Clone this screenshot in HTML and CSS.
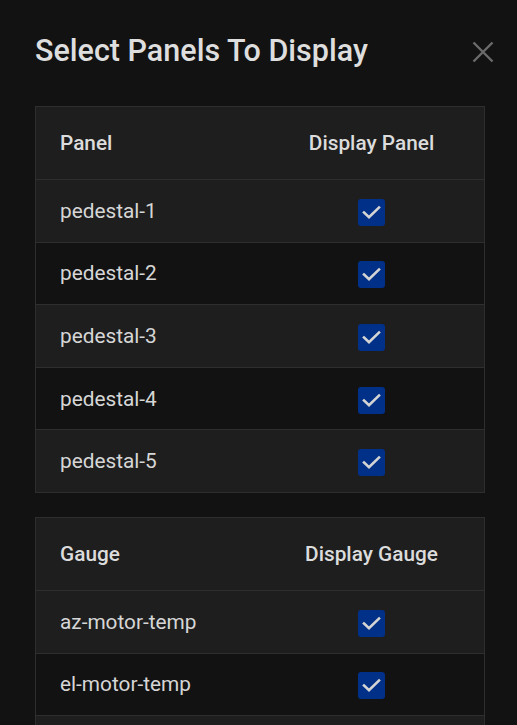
FILE: index.html
```html
<!DOCTYPE html>
<html lang="en">
<head>
<meta charset="utf-8">
<title>Select Panels To Display</title>
<link rel="stylesheet" href="styles.css">
</head>
<body>
<div class="dialog">
  <div class="dialog-head">
    <h1 class="title">Select Panels To Display</h1>
    <button class="close" aria-label="Close">
      <svg viewBox="0 0 22 22" width="22" height="22"><path d="M1.5 1.5 L20.5 20.5 M20.5 1.5 L1.5 20.5" stroke="#6b6b6b" stroke-width="2.4" fill="none"/></svg>
    </button>
  </div>

  <table class="grid">
    <thead>
      <tr><th>Panel</th><th class="c">Display Panel</th></tr>
    </thead>
    <tbody>
      <tr><td>pedestal-1</td><td class="c"><span class="cb"><svg viewBox="0 0 27 27"><polyline points="6,13.5 11,18.3 21,8.5"/></svg></span></td></tr>
      <tr><td>pedestal-2</td><td class="c"><span class="cb"><svg viewBox="0 0 27 27"><polyline points="6,13.5 11,18.3 21,8.5"/></svg></span></td></tr>
      <tr><td>pedestal-3</td><td class="c"><span class="cb"><svg viewBox="0 0 27 27"><polyline points="6,13.5 11,18.3 21,8.5"/></svg></span></td></tr>
      <tr><td>pedestal-4</td><td class="c"><span class="cb"><svg viewBox="0 0 27 27"><polyline points="6,13.5 11,18.3 21,8.5"/></svg></span></td></tr>
      <tr><td>pedestal-5</td><td class="c"><span class="cb"><svg viewBox="0 0 27 27"><polyline points="6,13.5 11,18.3 21,8.5"/></svg></span></td></tr>
    </tbody>
  </table>

  <table class="grid">
    <thead>
      <tr><th>Gauge</th><th class="c">Display Gauge</th></tr>
    </thead>
    <tbody>
      <tr><td>az-motor-temp</td><td class="c"><span class="cb"><svg viewBox="0 0 27 27"><polyline points="6,13.5 11,18.3 21,8.5"/></svg></span></td></tr>
      <tr><td>el-motor-temp</td><td class="c"><span class="cb"><svg viewBox="0 0 27 27"><polyline points="6,13.5 11,18.3 21,8.5"/></svg></span></td></tr>
      <tr><td></td><td class="c"></td></tr>
    </tbody>
  </table>
</div>
</body>
</html>
```

FILE: styles.css
```css
html, body {
  margin: 0;
  padding: 0;
  background: #121212;
  overflow: hidden;
}
body {
  font-family: Roboto, "Liberation Sans", sans-serif;
  color: #dedede;
}
.dialog {
  padding: 33px 32px 0 35px;
}
.dialog-head {
  display: flex;
  justify-content: space-between;
  align-items: flex-start;
  margin-bottom: 37px;
}
.title {
  margin: 0;
  font-size: 30.5px;
  font-weight: 500;
  color: #dedede;
  line-height: 36px;
}
.close {
  background: none;
  border: 0;
  padding: 0;
  margin-right: -9px;
  margin-top: 8px;
  width: 22px;
  height: 22px;
  display: flex;
}
.grid {
  width: 100%;
  border-collapse: collapse;
  table-layout: fixed;
  margin-bottom: 24px;
  border: 1px solid #2e2e2e;
}
.grid th,
.grid td {
  box-sizing: border-box;
  width: 50%;
  text-align: left;
  padding: 0 0 0 24px;
  border-bottom: 1px solid #2e2e2e;
}
.grid th.c,
.grid td.c {
  text-align: center;
  padding: 0 1px 0 0;
}
.grid th {
  height: 73px;
  font-size: 20.8px;
  font-weight: 500;
  color: #dcdcdc;
  background: #1e1e1e;
}
.grid td {
  height: 62.6px;
  font-size: 20.8px;
  font-weight: 400;
  color: #d6d6d6;
}
.grid tbody tr:nth-child(odd) td {
  background: #1e1e1e;
}
.grid tbody tr:nth-child(even) td {
  background: #121212;
}
.cb {
  display: inline-block;
  width: 27px;
  height: 27px;
  border-radius: 3px;
  background: #003087;
  vertical-align: middle;
  margin-top: 3px;
}
.cb svg {
  display: block;
  width: 27px;
  height: 27px;
}
.cb polyline {
  fill: none;
  stroke: #d4d4d4;
  stroke-width: 2.6;
  stroke-linecap: square;
}
```
